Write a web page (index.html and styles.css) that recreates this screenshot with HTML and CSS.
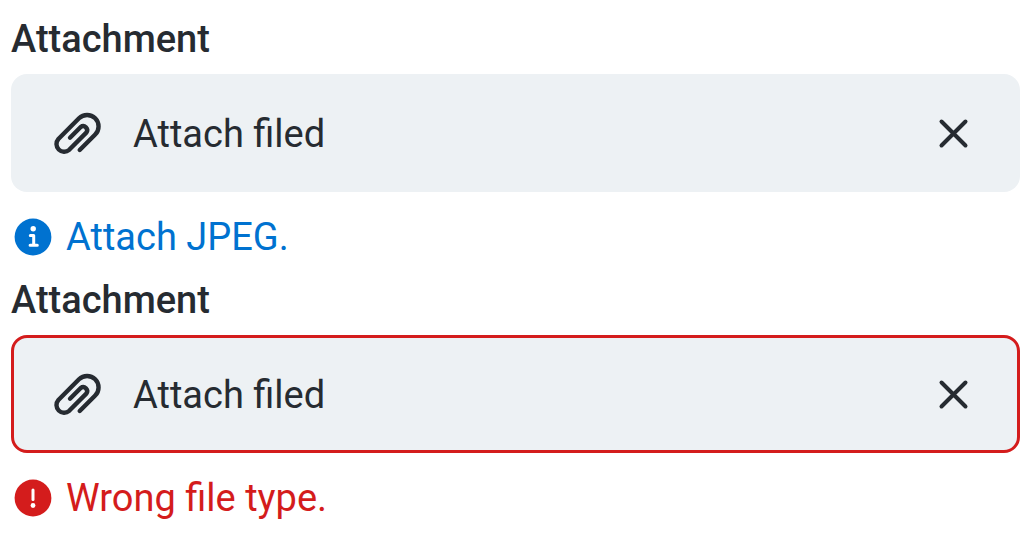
FILE: index.html
```html
<!DOCTYPE html>
<html lang="en">
<head>
<meta charset="utf-8">
<meta name="viewport" content="width=device-width, initial-scale=1">
<title>Attachment</title>
<link rel="stylesheet" href="styles.css">
</head>
<body>
<main class="form">
  <div class="group">
    <label class="label" for="attach-1">Attachment</label>
    <div class="field">
      <svg class="icon clip" viewBox="0 -1 48 48" aria-hidden="true"><path d="M25.7 40L41.2 24.5A11.4 11.4 0 0 0 25 8.3L4.4 29A7.65 7.65 0 0 0 15.2 39.8L32.3 22.6A4 4 0 0 0 26.7 17L16 27.7"/></svg>
      <button class="pick" id="attach-1" type="button" aria-describedby="hint-1">Attach filed</button>
      <button class="clear" type="button" aria-label="Remove"><svg class="icon" viewBox="0 0 48 48" aria-hidden="true"><path d="M11.5 12.5L35.5 36.5M35.5 12.5L11.5 36.5"/></svg></button>
    </div>
    <p class="hint" id="hint-1">
      <svg class="badge" viewBox="0 0 38 38" aria-hidden="true"><circle class="disc" cx="19" cy="19" r="18.4"/><circle class="dot" cx="19.2" cy="10.8" r="2.7"/><path class="mark" d="M16.3 17.5H19.7V27.2M16.1 27.2H23.3"/></svg>
      <span>Attach JPEG.</span>
    </p>
  </div>
  <div class="group">
    <label class="label" for="attach-2">Attachment</label>
    <div class="field field-error">
      <svg class="icon clip" viewBox="0 -1 48 48" aria-hidden="true"><path d="M25.7 40L41.2 24.5A11.4 11.4 0 0 0 25 8.3L4.4 29A7.65 7.65 0 0 0 15.2 39.8L32.3 22.6A4 4 0 0 0 26.7 17L16 27.7"/></svg>
      <button class="pick" id="attach-2" type="button" aria-describedby="hint-2">Attach filed</button>
      <button class="clear" type="button" aria-label="Remove"><svg class="icon" viewBox="0 0 48 48" aria-hidden="true"><path d="M11.5 12.5L35.5 36.5M35.5 12.5L11.5 36.5"/></svg></button>
    </div>
    <p class="hint hint-error" id="hint-2">
      <svg class="badge" viewBox="0 0 38 38" aria-hidden="true"><circle class="disc" cx="19" cy="19" r="18.4"/><path class="mark" d="M19 11V20.5"/><circle class="dot" cx="19" cy="26.5" r="2.4"/></svg>
      <span>Wrong file type.</span>
    </p>
  </div>
</main>
</body>
</html>
```

FILE: styles.css
```css
* {
  box-sizing: border-box;
}

body {
  margin: 0;
  background: #fff;
  color: #262b31;
  font: 400 38px/46px Roboto, sans-serif;
}

.form {
  display: flex;
  flex-direction: column;
  gap: 17px;
  padding: 16px 11px 10px;
}

.group {
  display: flex;
  flex-direction: column;
}

.label {
  margin-bottom: 12px;
  font-weight: 500;
}

.field {
  display: flex;
  align-items: center;
  padding: 32px 39px 32px 40px;
  border: 3px solid transparent;
  border-radius: 16px;
  background: #edf1f4 border-box;
}

.field-error {
  border-color: #d41c1c;
}

.icon {
  display: block;
  flex: none;
  width: 48px;
  height: 48px;
  fill: none;
  stroke: currentColor;
  stroke-width: 4;
  stroke-linecap: round;
  stroke-linejoin: round;
}

.clip {
  stroke-width: 4.4;
}

.pick,
.clear {
  padding: 0;
  border: 0;
  background: none;
  color: inherit;
  font: inherit;
  cursor: pointer;
}

.pick {
  flex: 1;
  min-width: 0;
  margin-left: 31px;
  padding-top: 2px;
  text-align: left;
}

.clear {
  flex: none;
}

.hint {
  display: flex;
  align-items: center;
  gap: 14px;
  margin: 22px 0 0;
  padding-left: 3px;
  color: #0072d0;
}

.hint-error {
  color: #d41c1c;
}

.badge {
  flex: none;
  width: 38px;
  height: 38px;
}

.disc {
  fill: currentColor;
}

.dot {
  fill: #fff;
}

.mark {
  fill: none;
  stroke: #fff;
  stroke-width: 3;
  stroke-linecap: round;
  stroke-linejoin: round;
}
```
